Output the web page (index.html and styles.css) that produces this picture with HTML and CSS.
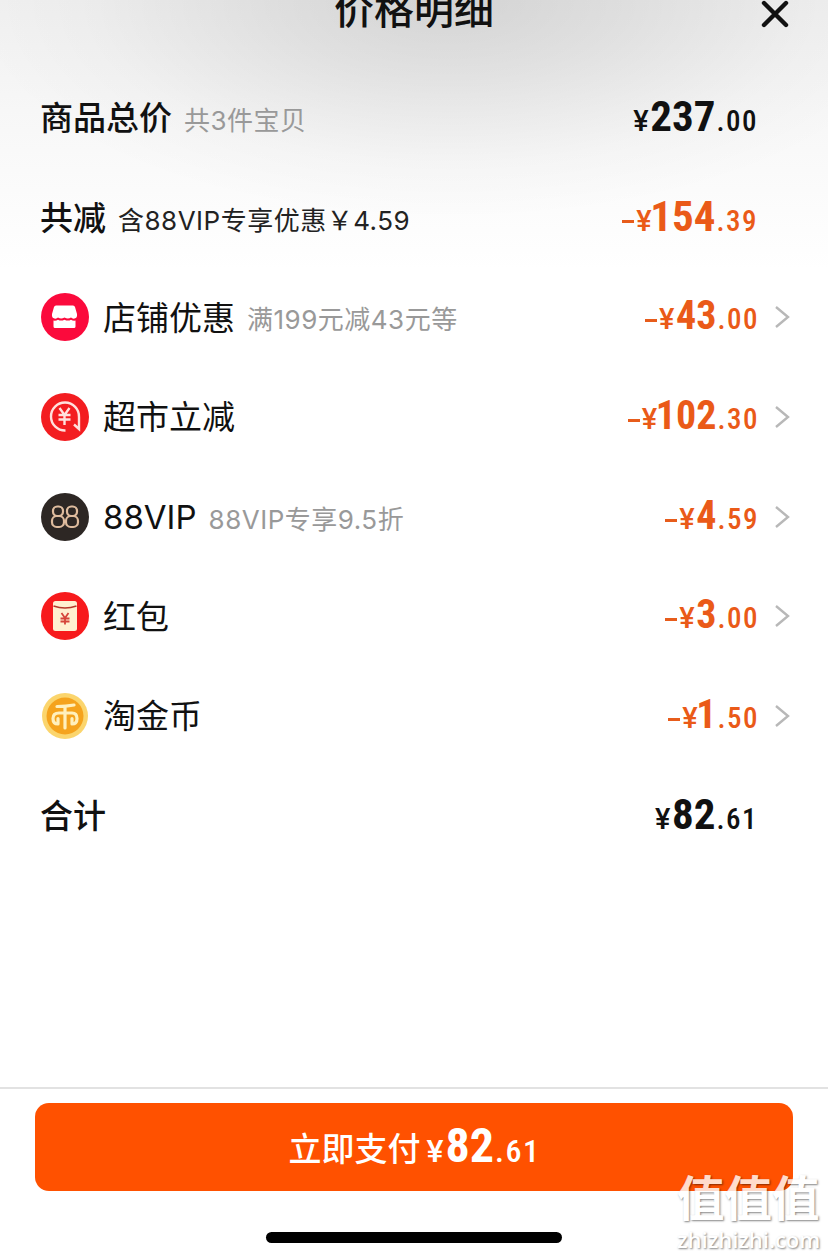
FILE: index.html
```html
<!DOCTYPE html>
<html lang="zh-CN">
	<head>
		<meta charset="utf-8" />
		<title>价格明细</title>
		<link rel="stylesheet" href="styles.css">
	</head>
	<body>
	<div class="sheet">
		<div class="header">
			<h1>价格明细</h1>
			<a class="close"><svg width="28" height="28" viewBox="0 0 28 28"><path d="M3 3L25 25M25 3L3 25"/></svg></a>
		</div>

		<ul class="list">
			<li class="total">
				<span class="name">商品总价</span><span class="note">共3件宝贝</span>
				<span class="price"><i>¥</i><b>237</b><em>.00</em></span>
			</li>
			<li class="total off">
				<span class="name">共减</span><span class="note dark">含88VIP专享优惠￥4.59</span>
				<span class="price orange"><s></s><i>¥</i><b class="one">154</b><em>.39</em></span>
			</li>
			<li>
				<svg class="icon" viewBox="0 0 48 48">
					<circle cx="24" cy="24" r="24" fill="#fb0a3c"/>
					<path fill="#fff" d="M15 12.500h17q1.500 0 2 1.500l2 7q.5 4-2.500 4.500q-2 .5-3.500-1q-3 2-6.500 0q-3.500 2-6.500 0q-1.500 1.500-3.500 1q-3-.5-2.500-4.500l2-7q.5-1.500 2-1.500zM12.500 27.500q2.500.5 4.500-.8q3 1.800 6.500 0q3.500 1.800 6.500 0q2 1.300 4.500.8v6q0 1.500-1.500 1.500h-19q-1.500 0-1.500-1.500z"/>
				</svg>
				<span class="name">店铺优惠</span><span class="note">满199元减43元等</span>
				<span class="price orange"><s></s><i>¥</i><b>43</b><em>.00</em></span>
				<svg class="arrow" viewBox="0 0 16 24"><path d="M2 2L14 12L2 22"/></svg>
			</li>
			<li>
				<svg class="icon" viewBox="0 0 48 48">
					<circle cx="24" cy="24" r="24" fill="#f31d20"/>
					<g fill="none" stroke="#ffe1dd" stroke-width="2.400">
						<path d="M24.500 37.500A14 14 0 1 1 38 24V36L33 31.500"/>
						<path d="M18.500 15l5 7l5-7M17.500 22h12M17.500 26.500h12M23.500 22v10"/>
					</g>
				</svg>
				<span class="name">超市立减</span>
				<span class="price orange"><s></s><i>¥</i><b class="one">102</b><em>.30</em></span>
				<svg class="arrow" viewBox="0 0 16 24"><path d="M2 2L14 12L2 22"/></svg>
			</li>
			<li>
				<svg class="icon" viewBox="0 0 48 48">
					<circle cx="24" cy="24" r="24" fill="#2d2724"/>
					<g fill="none" stroke="#dfbc9e" stroke-width="2.200">
						<rect x="12" y="13.500" width="10" height="9.500" rx="4.200"/>
						<rect x="11" y="23" width="12" height="11" rx="4.800"/>
						<rect x="26" y="13.500" width="10" height="9.500" rx="4.200"/>
						<rect x="25" y="23" width="12" height="11" rx="4.800"/>
					</g>
				</svg>
				<span class="name">88VIP</span><span class="note">88VIP专享9.5折</span>
				<span class="price orange"><s></s><i>¥</i><b>4</b><em>.59</em></span>
				<svg class="arrow" viewBox="0 0 16 24"><path d="M2 2L14 12L2 22"/></svg>
			</li>
			<li>
				<svg class="icon" viewBox="0 0 48 48">
					<circle cx="24" cy="24" r="24" fill="#f71a1c"/>
					<rect x="12" y="9" width="24" height="30" rx="2.500" fill="#fff0d0"/>
					<path fill="none" stroke="#b5372a" stroke-width="1.500" d="M12.500 14Q24 18 35.500 14"/>
					<path fill="none" stroke="#d5453a" stroke-width="1.800" d="M20.500 21l3.500 5l3.500-5M19.500 26.500h9M19.500 29.500h9M24 26v6.500"/>
				</svg>
				<span class="name">红包</span>
				<span class="price orange"><s></s><i>¥</i><b>3</b><em>.00</em></span>
				<svg class="arrow" viewBox="0 0 16 24"><path d="M2 2L14 12L2 22"/></svg>
			</li>
			<li>
				<svg class="icon" viewBox="0 0 48 48">
					<circle cx="24" cy="24" r="23" fill="#fbd56d"/>
					<circle cx="24" cy="24" r="18.500" fill="#f5a31d"/>
					<path fill="none" stroke="#fff0bd" stroke-width="3.200" stroke-linecap="round" stroke-linejoin="round" d="M16 14.500Q25 14.500 33 13M24 15V36M18 21H31Q36 21 36 26.500Q36 32 31 32V26.500M18 21Q12 21 12 26.500Q12 32 17 32V26.500"/>
				</svg>
				<span class="name">淘金币</span>
				<span class="price orange"><s></s><i>¥</i><b class="one">1</b><em>.50</em></span>
				<svg class="arrow" viewBox="0 0 16 24"><path d="M2 2L14 12L2 22"/></svg>
			</li>
			<li class="total">
				<span class="name">合计</span>
				<span class="price"><i>¥</i><b>82</b><em>.61</em></span>
			</li>
		</ul>

		<div class="footer">
			<a class="pay">立即支付<span class="price"><i>¥</i><b>82</b><em>.61</em></span></a>
			<div class="homebar"></div>
		</div>
		<div class="mark">
			<p class="mark-cn">值值值</p>
			<p class="mark-en">zhizhizhi.com</p>
		</div>
	</div>
	</body>
</html>
```
FILE: styles.css
```css
*{margin: 0;padding: 0;box-sizing: border-box;}
body{background: #fff;font-family: Inter,"Noto Sans CJK SC",sans-serif;color: #111;}
.sheet{width: 828px;height: 1257px;position: relative;overflow: hidden;display: flex;flex-direction: column;
background: radial-gradient(ellipse 480px 220px at 450px 0,rgba(0,0,0,0.12),rgba(0,0,0,0.08) 35%,rgba(0,0,0,0.02) 75%,rgba(0,0,0,0)),linear-gradient(#f0f0f0,#f7f7f7 110px,#fff 270px);}
.header{height: 68px;position: relative;text-align: center;}
.header h1{font-size: 40px;line-height: 60px;font-weight: 500;margin-top: -20px;}
.close{position: absolute;right: 39px;top: 0;height: 28px;}
.close svg{display: block;fill: none;stroke: #111;stroke-width: 4.400;stroke-linecap: round;}

.list{list-style-type: none;flex: 1;}
.list li{height: 99.700px;padding: 0 38px 0 41px;display: flex;align-items: center;white-space: nowrap;}
.list li.total{padding: 0 71px 0 40px;}
.icon{width: 48px;height: 48px;margin-right: 14px;flex: none;}
.name{font-size: 33px;line-height: 48px;padding-top: 1px;}
.total .name{font-weight: 500;}
.note{font-size: 26px;line-height: 40px;margin: 6px 0 0 12px;color: #999;letter-spacing: 0.500px;}
.dark{color: #222;}
.arrow{width: 16px;height: 24px;margin-left: 16px;fill: none;stroke: #b8b8b8;stroke-width: 2.400;}

/*价格：符号和小数用小字号*/
.price{margin-left: auto;font-family: Roboto,sans-serif;font-stretch: 75%;display: flex;align-items: baseline;line-height: 48px;padding-top: 1px;}
.price i,.price em{font-style: normal;font-weight: 500;font-size: 29px;}
.price i{width: 17px;font-stretch: 100%;}
.price em{margin-left: 1px;letter-spacing: 1.500px;margin-right: -1px;}
.price b{font-size: 40px;font-weight: 700;}
.price .one{margin-left: -3px;}
.total .price b{font-size: 43px;}
.price s{width: 12px;height: 3px;background: #e75c1b;margin: 6px 2px 0 0;align-self: center;}
.orange{color: #ea5a18;}

.footer{height: 170px;border-top: 2px solid #e2e2e2;padding: 14px 35px 0;}
.pay{height: 88px;border-radius: 14px;background: #ff5100;color: #fff;font-size: 33px;font-weight: 500;display: flex;align-items: center;justify-content: center;}
.pay .price{margin-left: 6px;padding-top: 3px;}
.pay .price b{font-size: 48px;}
.pay .price i,.pay .price em{font-size: 32px;}
.pay .price i{width: 19px;}
.homebar{width: 296px;height: 11px;border-radius: 6px;background: #000;margin: 41px auto 0;}

/*右下角水印*/
.mark{position: absolute;left: 677px;top: 1171px;color: #fff;opacity: 0.8;white-space: nowrap;text-shadow: 1px 1px 2px rgba(0,0,0,0.6);}
.mark-cn{font-size: 47.500px;line-height: 56px;font-weight: 700;}
.mark-en{font-family: "Open Sans",sans-serif;font-size: 22px;line-height: 24px;font-weight: 600;}
```
